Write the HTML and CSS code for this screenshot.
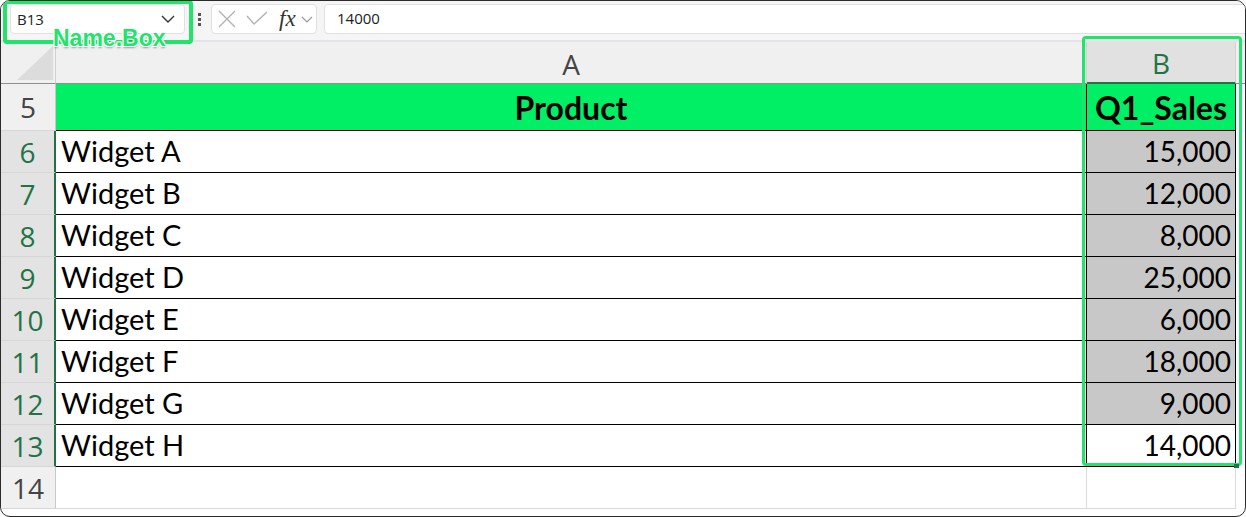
FILE: index.html
```html
<!DOCTYPE html>
<html lang="en">
<head>
    <meta charset="UTF-8">
    <title>Q1 Sales - Name Box</title>
    <link rel="stylesheet" href="styles.css">
</head>
<body>
    <div class="sheet">
        <!-- formula bar -->
        <div class="formula-bar">
            <div class="name-box">
                <span>B13</span>
                <svg class="chev" width="14" height="8" viewBox="0 0 14 8"><polyline points="1,1 7,7 13,1" fill="none" stroke="#333" stroke-width="1.4"/></svg>
            </div>
            <div class="bar-dots"><i></i><i></i><i></i></div>
            <div class="fx-box">
                <svg width="18" height="18" viewBox="0 0 18 18"><path d="M1 1L17 17M17 1L1 17" stroke="#b3b3b3" stroke-width="1.4" fill="none"/></svg>
                <svg width="22" height="16" viewBox="0 0 22 16"><polyline points="1,5 8,13 21,1" fill="none" stroke="#b3b3b3" stroke-width="1.4"/></svg>
                <span class="fx">fx</span>
                <svg width="12" height="7" viewBox="0 0 12 7"><polyline points="1,1 6,6 11,1" fill="none" stroke="#9a9a9a" stroke-width="1.2"/></svg>
            </div>
            <div class="formula-input">14000</div>
        </div>

        <!-- grid -->
        <div class="grid">
            <div class="corner"><svg width="36" height="34" viewBox="0 0 36 34"><polygon points="36,0 36,34 0,34" fill="#dcdcdc"/></svg></div>
            <div class="ch">A</div>
            <div class="ch sel">B</div>
            <div class="ch last"></div>

            <div class="rh">5</div>
            <div class="cell head">Product</div>
            <div class="cell head">Q1_Sales</div>
            <div class="cell rest"></div>

            <div class="rh sel">6</div>
            <div class="cell">Widget A</div>
            <div class="cell num">15,000</div>
            <div class="cell rest"></div>

            <div class="rh sel">7</div>
            <div class="cell">Widget B</div>
            <div class="cell num">12,000</div>
            <div class="cell rest"></div>

            <div class="rh sel">8</div>
            <div class="cell">Widget C</div>
            <div class="cell num">8,000</div>
            <div class="cell rest"></div>

            <div class="rh sel">9</div>
            <div class="cell">Widget D</div>
            <div class="cell num">25,000</div>
            <div class="cell rest"></div>

            <div class="rh sel">10</div>
            <div class="cell">Widget E</div>
            <div class="cell num">6,000</div>
            <div class="cell rest"></div>

            <div class="rh sel">11</div>
            <div class="cell">Widget F</div>
            <div class="cell num">18,000</div>
            <div class="cell rest"></div>

            <div class="rh sel">12</div>
            <div class="cell">Widget G</div>
            <div class="cell num">9,000</div>
            <div class="cell rest"></div>

            <div class="rh sel">13</div>
            <div class="cell">Widget H</div>
            <div class="cell num active">14,000</div>
            <div class="cell rest"></div>

            <div class="rh">14</div>
            <div class="cell empty"></div>
            <div class="cell empty"></div>
            <div class="cell rest"></div>
        </div>

        <!-- highlights drawn over the sheet -->
        <div class="name-hl"></div>
        <span class="name-label">Name.Box</span>
        <div class="col-sel"></div>
        <div class="fill-handle"></div>
    </div>
</body>
</html>
```

FILE: styles.css
```css
* {
    box-sizing: border-box;
}

body {
    margin: 0;
    background-color: #fff;
}

.sheet {
    position: relative;
    width: 1246px;
    height: 517px;
    border: 1px solid #2b2b2b;
    border-radius: 10px;
    overflow: hidden;
    background-color: #fff;
}

/* formula bar */
.formula-bar {
    display: flex;
    align-items: flex-start;
    height: 41px;
    padding: 3px 0 0 9px;
    background-color: #f5f5f5;
    border-bottom: 2px solid #e2e4e7;
    font-family: "Open Sans", "Noto Sans", sans-serif;
    font-size: 15px;
    color: #222;
}

.name-box {
    display: flex;
    align-items: center;
    justify-content: space-between;
    width: 175px;
    height: 30px;
    padding: 0 9px 0 6px;
    background-color: #fff;
    border: 1px solid #e1e1e1;
    border-radius: 4px;
}

.bar-dots {
    display: flex;
    flex-direction: column;
    gap: 2px;
    margin: 9px 10px 0 13px;
}

.bar-dots i {
    display: block;
    width: 3px;
    height: 3px;
    background-color: #555;
}

.fx-box {
    display: flex;
    align-items: center;
    width: 106px;
    height: 30px;
    padding: 0 0 0 6px;
    background-color: #fff;
    border: 1px solid #e1e1e1;
    border-radius: 4px;
    gap: 10px;
}

.fx-box .fx {
    font-family: "Liberation Serif", serif;
    font-style: italic;
    font-size: 23px;
    line-height: 24px;
    color: #333;
    margin-left: 1px;
    margin-right: -5px;
}

.formula-input {
    flex: 1;
    height: 30px;
    margin: 0 -10px 0 7px;
    padding: 3px 12px;
    background-color: #fff;
    border: 1px solid #e1e1e1;
    border-radius: 4px;
}

/* grid */
.grid {
    display: grid;
    grid-template-columns: 55px 1031px 149px 1fr;
    grid-template-rows: 42px 47px repeat(9, 42px);
}

.corner {
    display: flex;
    align-items: flex-end;
    justify-content: flex-end;
    padding: 0 2px 3px 0;
    background-color: #f0f0f0;
    border-right: 1px solid #d2d2d2;
    border-bottom: 1px solid #8f8f8f;
}

.ch {
    display: flex;
    align-items: center;
    justify-content: center;
    padding-top: 2px;
    background-color: #f0f0f0;
    border-right: 1px solid #d2d2d2;
    border-bottom: 1px solid #8f8f8f;
    font-family: "Open Sans", "Noto Sans", sans-serif;
    font-size: 28px;
    color: #444;
}

.ch.sel {
    background-color: #e1e1e1;
    color: #217346;
    border-bottom: 2px solid #217346;
}

.ch.last {
    border-right: none;
}

.rh {
    display: flex;
    align-items: center;
    justify-content: center;
    background-color: #f0f0f0;
    border-right: 1px solid #c8c8c8;
    border-bottom: 1px solid #d6d6d6;
    font-family: "Open Sans", "Noto Sans", sans-serif;
    font-size: 28px;
    color: #444;
}

.rh.sel {
    background-color: #e3e3e3;
    color: #217346;
    border-right: 2px solid #217346;
}

.cell {
    display: flex;
    align-items: flex-end;
    padding: 0 5px 4px;
    border-right: 1px solid #000;
    border-bottom: 1px solid #000;
    font-family: "Lato", "Open Sans", sans-serif;
    font-size: 29px;
    line-height: 34px;
    color: #000;
}

.cell.head {
    justify-content: center;
    background-color: #00ef64;
    font-weight: bold;
    font-size: 32px;
    padding-bottom: 5px;
}

.cell.num {
    justify-content: flex-end;
    background-color: #c8c8c8;
    padding-right: 4px;
    font-size: 28px;
}

.cell.num.active {
    background-color: #fff;
}

.cell.empty {
    border-right: 1px solid #dadada;
    border-bottom: 1px solid #dadada;
}

.cell.rest {
    border: none;
}

/* overlays */
.name-hl {
    position: absolute;
    left: 2px;
    top: -1px;
    width: 190px;
    height: 44px;
    border: 4px solid #22e36b;
    border-radius: 4px;
}

.name-label {
    position: absolute;
    left: 52px;
    top: 24px;
    font-family: "Liberation Sans", Arial, sans-serif;
    font-weight: bold;
    font-size: 23px;
    color: #22e36b;
    text-shadow: -1px -1px 0 #fff, 1px -1px 0 #fff, -1px 1px 0 #fff, 1px 1px 0 #fff, 0 2px 2px rgba(0, 0, 0, 0.35);
}

.col-sel {
    position: absolute;
    left: 1081px;
    top: 35px;
    width: 160px;
    height: 430px;
    border: 3px solid #22e36b;
    border-radius: 4px;
}

.fill-handle {
    position: absolute;
    left: 1233px;
    top: 463px;
    width: 5px;
    height: 4px;
    background-color: #217346;
}
```
